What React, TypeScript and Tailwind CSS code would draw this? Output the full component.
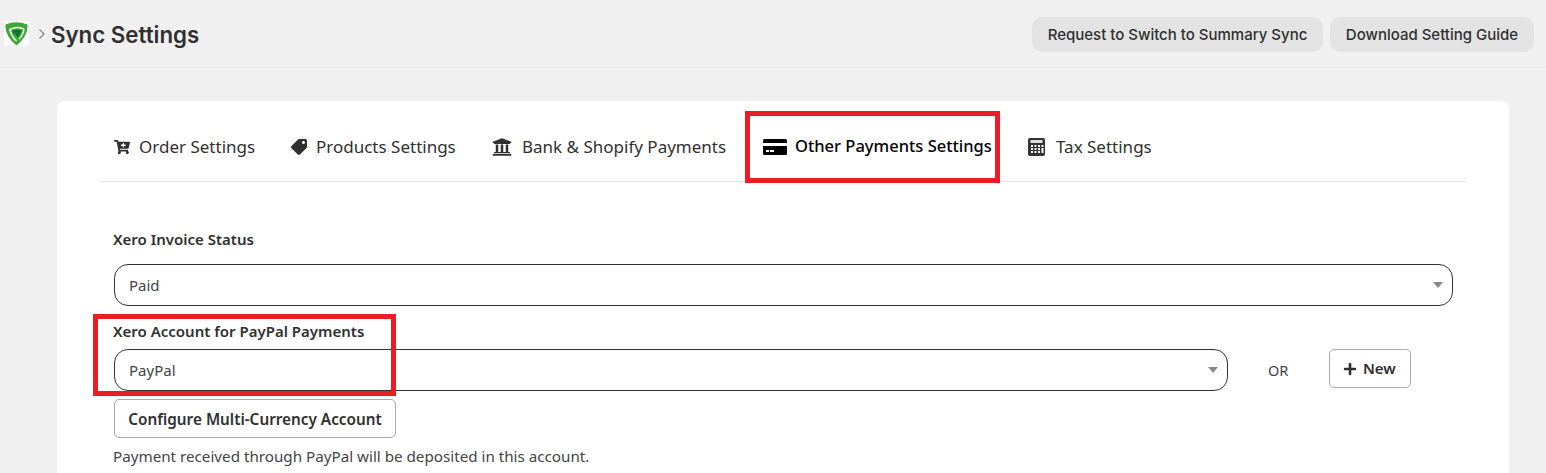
import type { ReactNode } from "react";
import { FaCartPlus, FaPlus, FaTag, FaUniversity } from "react-icons/fa";

function CardIcon() {
  return (
    <svg width="24" height="16" viewBox="0 0 24 16">
      <path d="M1.500 0 H22.500 Q24 0 24 1.500 V4 H0 V1.500 Q0 0 1.500 0Z" fill="#000" />
      <path d="M0 7 H24 V14.500 Q24 16 22.500 16 H1.500 Q0 16 0 14.500Z" fill="#000" />
      <rect x="3" y="11" width="3" height="2" fill="#fff" />
      <rect x="7" y="11" width="4" height="2" fill="#fff" />
    </svg>
  );
}

function CalculatorIcon() {
  const cols = [3, 6.500, 10];
  const rows = [7, 10, 13];
  return (
    <svg width="17" height="18" viewBox="0 0 17 18">
      <rect width="17" height="18" rx="2" fill="#333" />
      <rect x="2.500" y="2" width="12" height="3" fill="#ddd" />
      {rows.map((y) => cols.map((x) => <rect key={`${x}-${y}`} x={x} y={y} width="2" height="2" fill="#fff" />))}
      <rect x="13.500" y="7" width="2" height="2" fill="#fff" />
      <rect x="13.500" y="10" width="2" height="5" fill="#fff" />
    </svg>
  );
}

const TABS: { label: string; icon: ReactNode; width: string; gap: string; active?: boolean }[] = [
  { label: "Order Settings", icon: <FaCartPlus className="text-[16px]" />, width: "w-[177px]", gap: "gap-[9px]" },
  { label: "Products Settings", icon: <FaTag className="text-[16px] -scale-x-100" />, width: "w-[201px]", gap: "gap-[9px]" },
  { label: "Bank & Shopify Payments", icon: <FaUniversity className="text-[20px]" />, width: "w-[271px]", gap: "gap-[10px]" },
  { label: "Other Payments Settings", icon: <CardIcon />, width: "w-[265px]", gap: "gap-[8px]", active: true },
  { label: "Tax Settings", icon: <CalculatorIcon />, width: "w-[160px]", gap: "gap-[11px]" },
];

function SelectBox({ value, className }: { value: string; className: string }) {
  return (
    <div className={`flex items-center justify-between h-[42px] rounded-[14px] border border-[#333] bg-white pl-[14px] pr-[9px] ${className}`}>
      <span className="text-[15px] text-[#444]">{value}</span>
      <span className="w-0 h-0 border-x-[5px] border-x-transparent border-t-[6px] border-t-[#888]" />
    </div>
  );
}

export default function App() {
  return (
    <div className="relative h-[473px] overflow-hidden bg-[#f0f0f0] font-['Noto_Sans','Open_Sans',sans-serif]">
      <header className="flex items-center justify-between h-[68px] border-b border-[#e8e8e8] pl-[4px] pr-[12px] font-['Inter',sans-serif]">
        <div className="flex items-center">
          <svg width="25" height="25" viewBox="0 0 25 25" className="rounded-[3px] bg-white">
            <path d="M1.500 3.500 Q12 -1 23.500 3.500 Q24.500 15 12.500 24.500 Q0.500 15 1.500 3.500Z" fill="#3aaa35" />
            <path d="M5 9 Q12 4.500 20 8 M6 9 Q7.500 15.500 12.500 20 M20 8 Q19 14.500 15 18" fill="none" stroke="#fff" strokeWidth="1.500" />
            <path d="M8.500 10 Q13 7.500 17.500 10 L13.500 17 L11.500 12.500 L14.500 11 Q11.500 10.500 10.500 14Z" fill="#0e6b33" />
          </svg>
          <svg width="8" height="12" viewBox="0 0 8 12" className="ml-[9px]">
            <path d="M1.500 1.500 L6 6 L1.500 10.500" fill="none" stroke="#888" strokeWidth="1.300" />
          </svg>
          <h1 className="ml-[5px] mt-[3px] text-[22.300px] font-semibold text-[#303030]">Sync Settings</h1>
        </div>
        <div className="flex gap-[7px] mt-[2px]">
          <button className="h-[35px] w-[291px] pt-px rounded-[10px] bg-[#e3e3e3] text-[15px] font-medium text-[#303030]">
            Request to Switch to Summary Sync
          </button>
          <button className="h-[35px] w-[204px] pt-px rounded-[10px] bg-[#e3e3e3] text-[15px] font-medium text-[#303030]">
            Download Setting Guide
          </button>
        </div>
      </header>

      <main className="ml-[57px] mr-[37px] mt-[33px] rounded-t-[8px] bg-white px-[43px] h-[400px]">
        <nav className="flex h-[81px] border-b border-[#e3e3e3] pl-[14px] pt-[11px]">
          {TABS.map((tab) => (
            <div
              key={tab.label}
              className={`flex items-center ${tab.width} ${tab.gap} ${tab.active ? "text-[16.500px] font-medium text-black" : "text-[17px] text-[#303030]"}`}
            >
              {tab.icon}
              <span className="whitespace-nowrap">{tab.label}</span>
            </div>
          ))}
        </nav>

        <section className="pl-[14px] pr-[13px]">
          <label className="block -ml-px mt-[47px] h-[35px] text-[15px] font-semibold leading-[20px] text-[#303030]">Xero Invoice Status</label>
          <SelectBox value="Paid" className="w-full" />
          <label className="block -ml-px mt-[15px] h-[28px] text-[15px] font-semibold leading-[20px] text-[#303030]">Xero Account for PayPal Payments</label>
          <div className="flex items-start">
            <SelectBox value="PayPal" className="w-[1114px]" />
            <span className="ml-[40px] mt-[11px] text-[14.500px] text-[#444]">OR</span>
            <button className="ml-[41px] flex items-center justify-center gap-[6px] w-[82px] h-[39px] pr-[2px] rounded-[5px] border border-[#aaa] bg-white text-[15px] font-semibold text-[#303030]">
              <FaPlus className="text-[14px]" />
              New
            </button>
          </div>
          <button className="block mt-[8px] w-[282px] h-[39px] rounded-[5px] border border-[#aaa] bg-white text-[15.300px] leading-[39px] font-semibold text-[#303030]">
            Configure Multi-Currency Account
          </button>
          <p className="-ml-px mt-[7px] text-[15.200px] text-[#444]">Payment received through PayPal will be deposited in this account.</p>
        </section>
      </main>

      <div className="absolute left-[745px] top-[111px] w-[255px] h-[72px] border-[5px] border-[#ed1c24]" />
      <div className="absolute left-[93px] top-[314px] w-[303px] h-[82px] border-[5px] border-[#ed1c24]" />
    </div>
  );
}
